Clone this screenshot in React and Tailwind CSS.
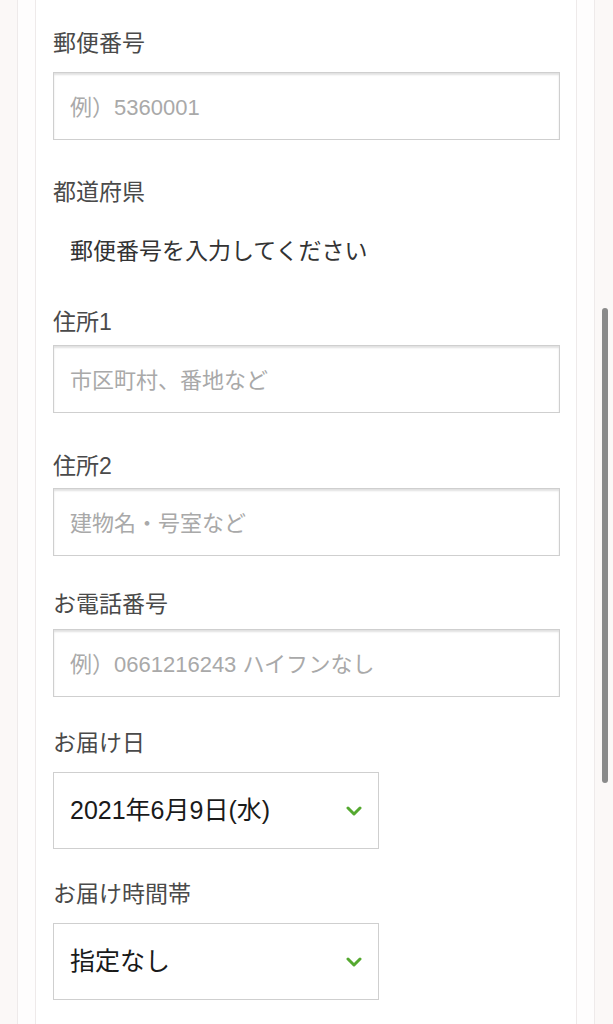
import React from 'react';

const font = { fontFamily: '"Liberation Sans", "Noto Sans CJK JP", "Noto Sans", sans-serif' };

const Label = ({ children, className = '' }) => (
  <div className={`text-[23px] leading-[28px] text-[#4a4a4a] ${className}`}>{children}</div>
);

const TextInput = ({ placeholder }) => (
  <input
    type="text"
    placeholder={placeholder}
    className="block w-full h-[68px] border border-[#cfcfcf] bg-white px-[16px] pt-[3px] text-[22px] text-[#333] placeholder:text-[#a9a9a9] shadow-[inset_0_2px_2px_rgba(0,0,0,0.12)] outline-none"
    style={font}
  />
);

const Chevron = () => (
  <svg width="16" height="10" viewBox="0 0 16 10" className="shrink-0">
    <polyline points="2,2 8,8 14,2" fill="none" stroke="#55a930" strokeWidth="3" strokeLinecap="round" strokeLinejoin="round" />
  </svg>
);

const SelectBox = ({ value }) => (
  <div className="flex items-center justify-between w-[326px] h-[77px] border border-[#cfcfcf] bg-white pl-[16px] pr-[16px]">
    <span className="text-[25px] text-[#1a1a1a]">{value}</span>
    <Chevron />
  </div>
);

export default function App() {
  return (
    <div className="relative min-h-screen bg-[#fbf8f7] overflow-hidden" style={font}>
      <div className="ml-[17px] w-[578px] min-h-screen border-x border-[#eeeaea] bg-[#fefdfd] px-[17px]">
        <div className="min-h-screen border-x border-[#eeeaea] bg-white pl-[17px] pr-[16px] pt-[29px] pb-[40px]">
          <Label className="mb-[15px]">郵便番号</Label>
          <TextInput placeholder="例）5360001" />

          <Label className="mt-[38px]">都道府県</Label>
          <div className="mt-[31px] pl-[17px] text-[23px] leading-[28px] text-[#333]">郵便番号を入力してください</div>

          <Label className="mt-[43px] mb-[9px]">住所1</Label>
          <TextInput placeholder="市区町村、番地など" />

          <Label className="mt-[39px] mb-[8px]">住所2</Label>
          <TextInput placeholder="建物名・号室など" />

          <Label className="mt-[34px] mb-[11px]">お電話番号</Label>
          <TextInput placeholder="例）0661216243 ハイフンなし" />

          <Label className="mt-[32px] mb-[15px]">お届け日</Label>
          <SelectBox value="2021年6月9日(水)" />

          <Label className="mt-[31px] mb-[15px]">お届け時間帯</Label>
          <SelectBox value="指定なし" />
        </div>
      </div>
      {/* scrollbar thumb */}
      <div className="absolute left-[602px] top-[308px] w-[6px] h-[475px] rounded-full bg-[#8a8a8a]" />
    </div>
  );
}
